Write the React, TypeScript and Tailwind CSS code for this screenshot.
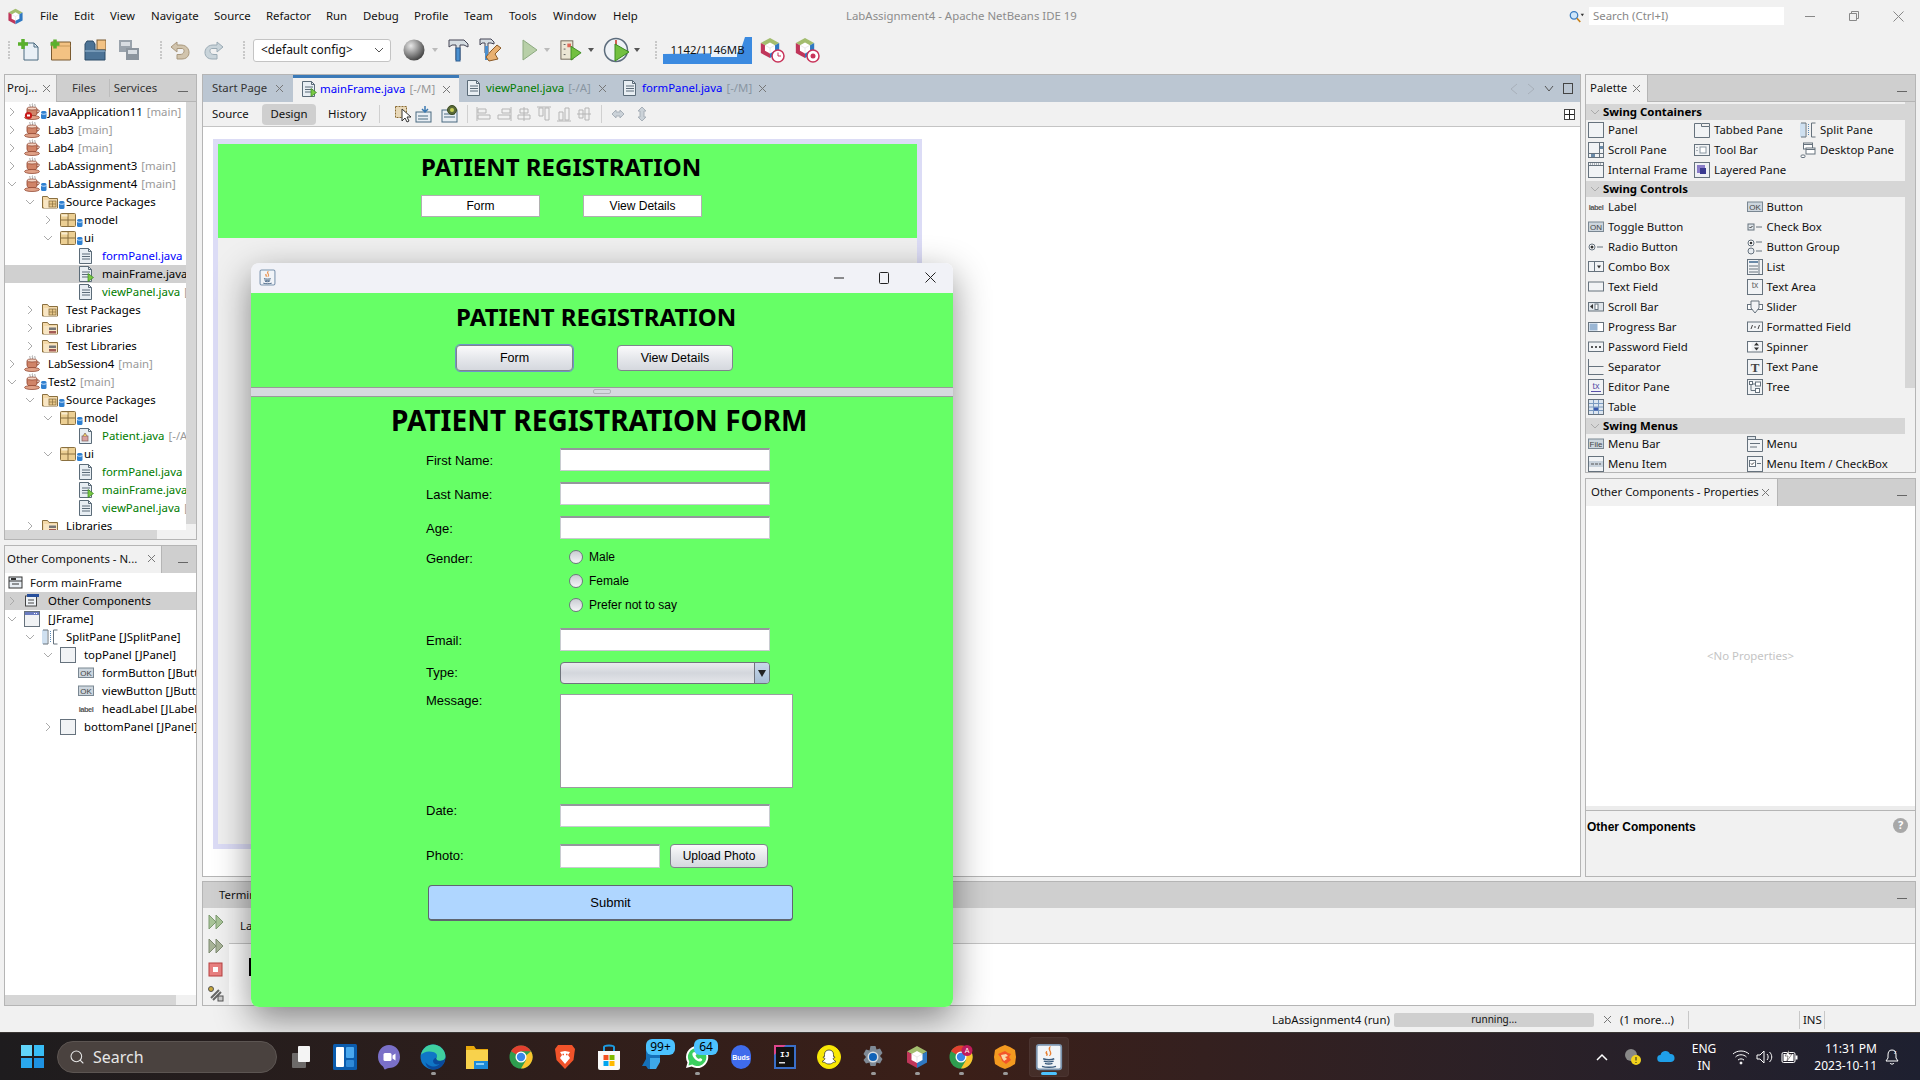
import React from "react";
import { Search } from "lucide-react";

const X = ({ c = "#777" }: { c?: string }) => (
  <svg width="9" height="9" viewBox="0 0 9 9" className="shrink-0"><path d="M1 1l7 7M8 1L1 8" stroke={c} strokeWidth="1" /></svg>
);
const Min = () => <div className="h-[1px] w-[10px] bg-[#666] mt-[6px]" />;
const ChevR = () => (
  <svg width="14" height="14" viewBox="0 0 14 14" className="shrink-0"><path d="M5 3l4 4-4 4" fill="none" stroke="#aaa" strokeWidth="1" /></svg>
);
const ChevD = () => (
  <svg width="14" height="14" viewBox="0 0 14 14" className="shrink-0"><path d="M3 5l4 4 4-4" fill="none" stroke="#aaa" strokeWidth="1" /></svg>
);

const DbBadge = () => (
  <svg width="8" height="18" viewBox="0 0 8 18"><rect x="1" y="8" width="5.5" height="8" rx="1.5" fill="#2f80d0" /><path d="M1 10.5c1.5 1 4 1 5.5 0" stroke="#cfe6ff" strokeWidth="1" fill="none" /></svg>
);
const Cup = ({ err }: { err?: boolean }) => (
  <svg width="16" height="18" viewBox="0 0 16 18">
    <path d="M6 1c-1 1 1 2 0 3M8.5 0.5c-1 1 1 2 0 3.5M11 1c-1 1 1 2 0 3" stroke="#999" fill="none" strokeWidth=".9" />
    <path d="M3 5.500h10v4.500c0 2-2 3.500-5 3.500S3 12 3 10z" fill="#d08468" stroke="#8a3c26" strokeWidth=".8" />
    <ellipse cx="8" cy="5.500" rx="5" ry="1.500" fill="#f4d6c6" stroke="#8a3c26" strokeWidth=".7" />
    <path d="M13 7h1.500c1 0 1 3-1.500 3" fill="none" stroke="#8a3c26" />
    <ellipse cx="8" cy="14.500" rx="7.500" ry="2" fill="#e0a288" stroke="#8a3c26" strokeWidth=".7" />
    {err && <circle cx="4.500" cy="12.500" r="3.600" fill="#c81818" />}
    {err && <rect x="3" y="11.500" width="3" height="2" fill="#fff" />}
  </svg>
);
const Folder = ({ kind }: { kind: "pkg" | "lib" }) => (
  <svg width="16" height="16" viewBox="0 0 16 16">
    <path d="M.5 14V2.500h5l1.500 2h8.500V14z" fill="#f4d9a8" stroke="#8a7040" />
    <rect x="2" y="6" width="13" height="8" fill="#f8e6c4" />
    {kind === "pkg" ? (
      <g><rect x="7" y="7" width="7" height="6" fill="#e8c88a" stroke="#8a7040" strokeWidth=".8" /><path d="M10.500 7v6M7 10h7" stroke="#8a7040" strokeWidth=".7" /></g>
    ) : (
      <g><rect x="7" y="7.500" width="7" height="2.500" fill="#777" /><rect x="7" y="11" width="7" height="2.500" fill="#a35b55" /></g>
    )}
  </svg>
);
const Pkg = () => (
  <svg width="16" height="14" viewBox="0 0 16 14"><rect x=".5" y=".5" width="15" height="13" rx="1" fill="#eccf93" stroke="#8a7040" /><path d="M.5 7h15M8 1v12" stroke="#8a7040" /><rect x="1.500" y="1.500" width="6" height="2" fill="#f8ecd0" /></svg>
);
const JavaFile = ({ run, star }: { run?: boolean; star?: boolean }) => (
  <svg width="16" height="16" viewBox="0 0 16 16" className="shrink-0">
    <path d="M1.500 .5h9l3 3v12h-12z" fill="#e8eef3" stroke="#5b6b78" />
    <path d="M10.500 .5v3h3" fill="none" stroke="#5b6b78" />
    {star ? (
      <g><rect x="4" y="8" width="6" height="5" fill="#d8a0a0" stroke="#80605a" strokeWidth=".7" /><path d="M5 8l2-3 2 3" fill="#f0d060" stroke="#80605a" strokeWidth=".7" /></g>
    ) : (
      <path d="M4 6h8M4 8.500h8M4 11h8" stroke="#5b6b78" />
    )}
    {run && <path d="M10 7.500l5.500 4-5.500 4z" fill="#7ac943" stroke="#3a8a20" strokeWidth=".7" />}
  </svg>
);

type Row = { d: number; ch?: "r" | "d"; icon: React.ReactNode; badge?: boolean; t: string; s?: string; c?: string; sel?: boolean };
const pads = ["pl-0", "pl-[18px]", "pl-[36px]", "pl-[54px]"];
const G = "text-[#007c00]";
const projRows: Row[] = [
  { d: 0, ch: "r", icon: <Cup err />, badge: true, t: "JavaApplication11", s: "[main]" },
  { d: 0, ch: "r", icon: <Cup />, t: "Lab3", s: "[main]" },
  { d: 0, ch: "r", icon: <Cup />, t: "Lab4", s: "[main]" },
  { d: 0, ch: "r", icon: <Cup />, t: "LabAssignment3", s: "[main]" },
  { d: 0, ch: "d", icon: <Cup />, badge: true, t: "LabAssignment4", s: "[main]" },
  { d: 1, ch: "d", icon: <Folder kind="pkg" />, badge: true, t: "Source Packages" },
  { d: 2, ch: "r", icon: <Pkg />, badge: true, t: "model" },
  { d: 2, ch: "d", icon: <Pkg />, badge: true, t: "ui" },
  { d: 3, icon: <JavaFile />, t: "formPanel.java", s: "[-/M]", c: "text-[#0000ff]" },
  { d: 3, icon: <JavaFile run />, t: "mainFrame.java", s: "[-/M]", sel: true },
  { d: 3, icon: <JavaFile />, t: "viewPanel.java", s: "[-/A]", c: G },
  { d: 1, ch: "r", icon: <Folder kind="pkg" />, t: "Test Packages" },
  { d: 1, ch: "r", icon: <Folder kind="lib" />, t: "Libraries" },
  { d: 1, ch: "r", icon: <Folder kind="lib" />, t: "Test Libraries" },
  { d: 0, ch: "r", icon: <Cup />, t: "LabSession4", s: "[main]" },
  { d: 0, ch: "d", icon: <Cup />, badge: true, t: "Test2", s: "[main]" },
  { d: 1, ch: "d", icon: <Folder kind="pkg" />, badge: true, t: "Source Packages" },
  { d: 2, ch: "d", icon: <Pkg />, badge: true, t: "model" },
  { d: 3, icon: <JavaFile star />, t: "Patient.java", s: "[-/A]", c: G },
  { d: 2, ch: "d", icon: <Pkg />, badge: true, t: "ui" },
  { d: 3, icon: <JavaFile />, t: "formPanel.java", s: "[-/A]", c: G },
  { d: 3, icon: <JavaFile run />, t: "mainFrame.java", s: "[-/A]", c: G },
  { d: 3, icon: <JavaFile />, t: "viewPanel.java", s: "[-/A]", c: G },
  { d: 1, ch: "r", icon: <Folder kind="lib" />, t: "Libraries" },
];

const Box = ({ children }: { children?: React.ReactNode }) => (
  <svg width="16" height="16" viewBox="0 0 16 16">{children ?? <rect x=".5" y=".5" width="15" height="15" fill="#f1f3f5" stroke="#66727d" />}</svg>
);
const OkIcon = ({ t = "OK" }: { t?: string }) => (
  <Box>
    <rect x=".5" y="3" width="15" height="9.500" fill="#cdd6de" stroke="#7a8792" />
    <text x="8" y="10.800" textAnchor="middle" fontSize="8" fontFamily="Liberation Sans" fill="#444">{t}</text>
  </Box>
);
const LabelIcon = () => (
  <Box><text x="8" y="10.500" textAnchor="middle" fontSize="7.500" fontWeight="700" fontFamily="Liberation Sans" fill="#555" letterSpacing="-.5">label</text></Box>
);
const L = "#66727d";
const BF = "#f1f3f5";
const pal: Record<string, React.ReactNode> = {
  "Panel": <Box />,
  "Tabbed Pane": <Box><path d="M.5 15.500v-14h7v3h8v11z" fill={BF} stroke={L} /><path d="M8 1.500h7.500v3" fill="none" stroke={L} /></Box>,
  "Split Pane": <Box><rect x="0" y="1" width="5" height="14" fill="#cfe0f0" /><path d="M1 1h5v14H1M15.500 1h-4v14h4" fill="none" stroke={L} /><path d="M8.500 2v12" stroke="#5a8ab8" strokeDasharray="1 1" /></Box>,
  "Scroll Pane": <Box><rect x=".5" y=".5" width="15" height="15" fill={BF} stroke={L} /><path d="M11.500 1v14M1 11.500h14" stroke={L} /><rect x="12" y="4" width="3" height="3" fill="#6a8aa8" /><rect x="3" y="12" width="4" height="3" fill="#6a8aa8" /></Box>,
  "Tool Bar": <Box><rect x=".5" y="2.500" width="15" height="11" fill={BF} stroke={L} /><rect x="6" y="5" width="6" height="6" fill="#fff" stroke="#8a97a2" /><path d="M3 5v1M3 8v1" stroke={L} /></Box>,
  "Desktop Pane": <Box><rect x="3.500" y="1" width="9" height="6" fill="#fff" stroke={L} /><rect x="6" y="6" width="9" height="6" fill="#fff" stroke={L} /><path d="M3.500 2.500h9M6 7.500h9" stroke={L} /><rect x="1" y="13" width="4" height="2.500" rx="1" fill="#fff" stroke={L} /></Box>,
  "Internal Frame": <Box><rect x=".5" y=".5" width="15" height="15" fill={BF} stroke={L} /><path d="M1 3.500h14" stroke={L} /><path d="M2 2h12" stroke={L} strokeDasharray="1 1" /></Box>,
  "Layered Pane": <Box><rect x=".5" y=".5" width="15" height="15" fill="#eef0f4" stroke={L} /><rect x="3" y="3" width="8" height="8" fill="#8a7cc8" /><rect x="6" y="6" width="6" height="6" fill="#3a3a90" /></Box>,
  "Label": <LabelIcon />,
  "Button": <OkIcon />,
  "Toggle Button": <OkIcon t="ON" />,
  "Check Box": <Box><rect x="1" y="5" width="6" height="6" fill="#dfe5ea" stroke={L} /><path d="M2.500 8l1 1 2-2" stroke="#333" fill="none" /><path d="M9 8h6" stroke={L} /></Box>,
  "Radio Button": <Box><circle cx="4" cy="8" r="3" fill="#fff" stroke={L} /><circle cx="4" cy="8" r="1.500" fill="#333" /><path d="M9 8h6" stroke={L} /></Box>,
  "Button Group": <Box><circle cx="4" cy="4" r="3" fill="#fff" stroke={L} /><circle cx="4" cy="4" r="1.300" fill="#333" /><circle cx="4" cy="12" r="3" fill="#e8ecf0" stroke={L} /><path d="M9 3h6M9 12h6" stroke={L} /></Box>,
  "Combo Box": <Box><rect x=".5" y="2.500" width="15" height="10" fill={BF} stroke={L} /><path d="M6.500 3v9" stroke={L} /><path d="M9 6.500h4l-2 3z" fill="#333" /></Box>,
  "List": <Box><rect x=".5" y=".5" width="15" height="15" fill={BF} stroke={L} /><rect x="2" y="2" width="9" height="2" fill="#6a8aa8" /><path d="M2 7h9M2 10h9M2 13h9M12 1v14" stroke={L} /></Box>,
  "Text Field": <Box><rect x=".5" y="3" width="15" height="9" fill={BF} stroke={L} /></Box>,
  "Text Area": <Box><rect x=".5" y=".5" width="15" height="15" fill={BF} stroke={L} /><text x="8" y="9" textAnchor="middle" fontSize="8.500" fontFamily="Liberation Sans" fill="#666">tx</text></Box>,
  "Scroll Bar": <Box><rect x=".5" y="3.500" width="15" height="8.500" fill="#dfe5ea" stroke={L} /><path d="M5 5l-3 2.500 3 2.500z" fill="#333" /><rect x="7" y="5" width="3" height="5.500" fill="#fff" stroke={L} /></Box>,
  "Slider": <Box><rect x=".5" y="5.500" width="15" height="5" fill="#fff" stroke={L} /><path d="M4 2h8v7l-4 5-4-5z" fill="#f1f3f5" stroke={L} /></Box>,
  "Progress Bar": <Box><rect x=".5" y="3.500" width="15" height="9" fill="#fff" stroke={L} /><rect x="1.500" y="4.500" width="8" height="7" fill="#9ab6d4" /></Box>,
  "Formatted Field": <Box><rect x=".5" y="3" width="15" height="9.500" fill={BF} stroke={L} /><path d="M4 10l1.500-4M7 8h2M11 10l1.500-4" stroke="#444" /></Box>,
  "Password Field": <Box><rect x=".5" y="3" width="15" height="9.500" fill={BF} stroke={L} /><path d="M3 8h10" stroke="#222" strokeWidth="1.500" strokeDasharray="2 2" /></Box>,
  "Spinner": <Box><rect x=".5" y="2.500" width="15" height="10.500" fill={BF} stroke={L} /><rect x="1.500" y="3.500" width="3" height="8.500" fill="#fff" /><path d="M7 6.500l2.500-3 2.500 3zM7 8.500l2.500 3 2.500-3z" fill="#333" /></Box>,
  "Separator": <Box><path d="M.5 0v16M.5 7.500h15" stroke={L} /><path d="M.5 15.500h15" stroke={L} /></Box>,
  "Text Pane": <Box><rect x=".5" y=".5" width="15" height="15" fill={BF} stroke={L} /><text x="8" y="12.500" textAnchor="middle" fontSize="13" fontWeight="700" fontFamily="Liberation Serif" fill="#444">T</text></Box>,
  "Editor Pane": <Box><rect x=".5" y=".5" width="15" height="15" fill={BF} stroke={L} /><text x="8" y="9.500" textAnchor="middle" fontSize="9" fontFamily="Liberation Sans" fill="#5a50a8">tx</text><path d="M3 12.500h10" stroke="#5a50a8" /></Box>,
  "Tree": <Box><rect x=".5" y=".5" width="15" height="15" fill={BF} stroke={L} /><rect x="2.500" y="2.500" width="3" height="3" fill="#fff" stroke={L} /><rect x="8.500" y="3" width="5" height="4" fill="#fff" stroke={L} /><rect x="8.500" y="9.500" width="4" height="4" fill="#fff" stroke={L} /><path d="M4 6v5.500h4.500M6 5h2" stroke={L} fill="none" /></Box>,
  "Table": <Box><rect x=".5" y=".5" width="15" height="15" fill="#dde6f0" stroke={L} /><path d="M1 4.500h14M1 8h14M1 11.500h14M5.500 1v14M10.500 1v14" stroke="#7a9ac0" /><rect x="6" y="8.500" width="4" height="3" fill="#3a5ab0" /></Box>,
  "Menu Bar": <OkIcon t="File" />,
  "Menu": <Box><path d="M.5 15.500V3.500h15v12z" fill={BF} stroke={L} /><rect x=".5" y=".5" width="8" height="3" fill="#dfe5ea" stroke={L} /><path d="M3 7.500h10M3 11h7" stroke={L} /></Box>,
  "Menu Item": <Box><rect x=".5" y=".5" width="15" height="15" fill={BF} stroke={L} /><rect x="1" y="5" width="14" height="6" fill="#c8d2dc" /><path d="M3 8h10" stroke="#555" strokeDasharray="3 1" /></Box>,
  "Menu Item / CheckBox": <Box><rect x=".5" y=".5" width="15" height="15" fill={BF} stroke={L} /><rect x="2.500" y="4.500" width="6" height="6" fill="#fff" stroke={L} /><path d="M4 7.500l1 1 2-2" stroke="#333" fill="none" /><path d="M10 7.500h4" stroke={L} /></Box>,
};

const PalItem = ({ n, w }: { n: string; w: string }) => (
  <div className={`flex items-center h-[20px] gap-[4px] ${w}`}>
    <span className="shrink-0 w-[16px] h-[16px] flex">{pal[n]}</span>
    <span className="whitespace-nowrap">{n}</span>
  </div>
);
const PalHead = ({ t }: { t: string }) => (
  <div className="flex items-center h-[16px] bg-[#d6d6d6] font-bold text-black pl-[2px] gap-[1px]"><ChevD /><span>{t}</span></div>
);
const PalTwo = ({ a, b }: { a: string; b?: string }) => (
  <div className="flex pl-[2px]"><PalItem n={a} w="w-[160px]" />{b && <PalItem n={b} w="w-[160px]" />}</div>
);

const PanelTab = ({ t, w, close = true }: { t: string; w: string; close?: boolean }) => (
  <div className={`flex h-[27px] items-center bg-[#f1f1f1] border-r border-[#b5b5b5] pl-[2px] pr-[5px] justify-between ${w}`}>
    <span className="whitespace-nowrap">{t}</span>{close && <X />}
  </div>
);

const TreeRow = ({ r }: { r: Row }) => (
  <div className={`flex items-center h-[18px] whitespace-nowrap overflow-hidden ${pads[r.d]} ${r.sel ? "bg-[#d0d0d0]" : ""}`}>
    <span className="w-[14px] h-[14px] shrink-0 ml-0 flex">{r.ch === "r" ? <ChevR /> : r.ch === "d" ? <ChevD /> : null}</span>
    <span className="w-[16px] h-[18px] ml-[5px] shrink-0 flex items-center">{r.icon}</span>
    <span className="w-[8px] h-[18px] shrink-0 flex">{r.badge && <DbBadge />}</span>
    <span className={r.c ?? "text-black"}>{r.t}</span>
    {r.s && <span className="text-[#9a9a9a] ml-[4px]">{r.s}</span>}
  </div>
);

const Grip = ({ ml }: { ml: string }) => (
  <div className={`w-[2px] h-[18px] shrink-0 ${ml} flex flex-col justify-between`}>
    {[0, 1, 2, 3, 4, 5].map((i) => <div key={i} className="w-[2px] h-[2px] bg-[#c8c8c8]" />)}
  </div>
);
const TB = ({ ml, w, children }: { ml: string; w: string; children: React.ReactNode }) => (
  <div className={`${ml} ${w} h-[26px] shrink-0 flex items-center justify-center`}>{children}</div>
);
const Tri = ({ ml, c = "#bbb" }: { ml: string; c?: string }) => (
  <svg width="6" height="4" viewBox="0 0 6 4" className={`${ml} shrink-0`}><path d="M0 0h6L3 4z" fill={c} /></svg>
);

const NB = ({ size = 24 }: { size?: number }) => (
  <svg width={size} height={size} viewBox="0 0 24 24">
    <path d="M12 1l10 5.500L12 12 2 6.500z" fill="#a3bd6e" />
    <path d="M2 6.500L12 12v11L2 17.500z" fill="#c0365a" />
    <path d="M22 6.500L12 12v11l10-5.500z" fill="#2f78c2" />
    <path d="M12 6l5.500 3v6L12 18l-5.500-3V9z" fill="#fff" />
    <path d="M12 12v6M12 12l5.500-3M12 12L6.500 9" stroke="#d8d8d8" strokeWidth=".6" />
  </svg>
);

const JavaCup = ({ s = 16 }: { s?: number }) => (
  <svg width={s} height={s} viewBox="0 0 24 24">
    <rect x="1.500" y="1.500" width="21" height="21" rx="2" fill="#f1f4f8" stroke="#7b93ad" strokeWidth="1.500" />
    <path d="M13 3c-3 3 2 4-.5 8 3-2.500-1-4 .5-8zM10 7c-2 2 1 2.500 0 4 1.500-1.500-.5-2.500 0-4z" fill="#e8731a" stroke="#e8731a" strokeWidth=".6" />
    <path d="M7 13.500c3 1 7 1 9.500 0M7.500 15.500c2.500.8 6 .8 8.500 0M8.500 17.500c2 .6 4.500.6 6.500 0M6 20c3 1 9 1 12 0" stroke="#3a5a7c" strokeWidth="1.200" fill="none" />
  </svg>
);

const Chrome = ({ badge }: { badge?: boolean }) => (
  <svg width="24" height="24" viewBox="0 0 24 24">
    <circle cx="12" cy="12" r="11.500" fill="#2e9e4f" />
    <path d="M2 6.200A11.500 11.500 0 0 1 22 6.200H12l-5 3z" fill="#e2402f" />
    <path d="M22 6.200A11.500 11.500 0 0 1 12 23.500l4.800-8 .2-5z" fill="#fbc32d" />
    <circle cx="12" cy="12" r="5.500" fill="#fff" />
    <circle cx="12" cy="12" r="4.200" fill="#3b86e8" />
    {badge && <circle cx="18" cy="5.500" r="5.500" fill="#c01c5c" />}
    {badge && <text x="18" y="8" textAnchor="middle" fontSize="7" fill="#fff" fontFamily="Liberation Sans">A</text>}
  </svg>
);

const tbIcons: { key: string; node: React.ReactNode; dot?: boolean; act?: boolean; badge?: string; bw?: string }[] = [
  { key: "task", node: <svg width="24" height="24" viewBox="0 0 24 24"><rect x="3" y="8" width="14" height="15" rx="1" fill="#6d6a69" /><rect x="9" y="1" width="12" height="16" rx="1" fill="#f4f4f4" /></svg> },
  { key: "widg", node: <svg width="24" height="26" viewBox="0 0 24 26"><rect x="0" y="0" width="24" height="26" rx="1.500" fill="#0b5cad" /><rect x="3" y="3" width="8" height="20" rx="1" fill="#fff" /><rect x="13" y="3" width="8" height="11" rx="1" fill="#4aa8ee" /><rect x="13" y="16" width="8" height="7" rx="1" fill="#2f8ad8" /></svg> },
  { key: "teams", node: <svg width="24" height="26" viewBox="0 0 24 26"><path d="M12 1c6.500 0 11 5 11 12 0 6.500-4.500 11-11 11-1.500 0-2.500 1-4 1.500-1 0-1-2-2-3C3 20.500 1 17 1 13 1 6 5.500 1 12 1z" fill="#7a70c8" /><rect x="6.500" y="9" width="8" height="8" rx="1.500" fill="#fff" /><path d="M15.500 11.500l3-2v7l-3-2z" fill="#fff" /></svg> },
  { key: "edge", dot: true, node: <svg width="26" height="26" viewBox="0 0 24 24"><circle cx="12" cy="12" r="11.500" fill="#0f76c6" /><path d="M23.500 12c0 4-2.500 11-10 11.500-5 0-8-3-8.500-7 2 4 10 6 13 2-3 1-6 0-6-3 1-4 7-3.500 11.500-3.500z" fill="#0a4a9c" /><path d="M1 10C2 4 7 .5 12 .5c6 0 11.500 5 11.500 11 0 3-3 4-5.500 4-2 0-3-1-3-2.500 1-1 1.500-4-2-5.500C8 6 3 7 1 10z" fill="#3fd0a0" /></svg> },
  { key: "exp", node: <svg width="24" height="26" viewBox="0 0 24 26"><path d="M1 2h8l2 3h12v19H1z" fill="#e8a80c" /><rect x="1" y="6" width="22" height="19" fill="#f8d24c" /><rect x="9" y="17" width="14" height="8" fill="#1c8ad8" /><rect x="11" y="19" width="8" height="2" fill="#8ad0f8" /></svg> },
  { key: "chrome", node: <Chrome /> },
  { key: "brave", node: <svg width="22" height="26" viewBox="0 0 22 26"><path d="M4 1h14l3 4-1.500 11L11 25 2.500 16 1 5z" fill="#f1532a" /><path d="M6 8l5-1 5 1-2 3 2 3-5 6-5-6 2-3z" fill="#fff" /><path d="M8.500 10.500h1.500M12 10.500h1.500" stroke="#f1532a" strokeWidth="1.500" /></svg> },
  { key: "store", node: <svg width="24" height="26" viewBox="0 0 24 26"><path d="M7 7V3c0-2 10-2 10 0v4" fill="none" stroke="#1d9be0" strokeWidth="2" /><path d="M1 7h22v17a2 2 0 0 1-2 2H3a2 2 0 0 1-2-2z" fill="#fafafa" /><rect x="6.500" y="11" width="5" height="5" fill="#f25022" /><rect x="12.500" y="11" width="5" height="5" fill="#7fba00" /><rect x="6.500" y="17" width="5" height="5" fill="#00a4ef" /><rect x="12.500" y="17" width="5" height="5" fill="#ffb900" /></svg> },
  { key: "mail", badge: "99+", bw: "left-[15px] w-[29px]", node: <svg width="24" height="26" viewBox="0 0 24 26"><path d="M5 1h14v15l-5 9H7l-2-3H1l4-7z" fill="#1570b8" /><path d="M9 14h10v4l-4 7H9z" fill="#3ea8e8" /></svg> },
  { key: "wa", dot: true, badge: "64", bw: "left-[19px] w-[24px]", node: <svg width="24" height="26" viewBox="0 0 24 24"><path d="M12 1a11 11 0 0 0-9.500 16.500L1 23l5.700-1.500A11 11 0 1 0 12 1z" fill="#fff" /><path d="M12 3a9 9 0 0 0-7.700 13.700L3.500 20.500l3.900-1A9 9 0 1 0 12 3z" fill="#3ccf5f" /><path d="M8 7.500c-1 1-1 3 1 5.500s4.500 4 6.500 3.500c1.500-.5 2-2 1.500-2.500l-2-1-1 1c-1.500-.5-3-2-3.500-3.500l1-1-1-2.500c-1 0-2 .2-2.500.5z" fill="#fff" /></svg> },
  { key: "buds", node: <svg width="20" height="26" viewBox="0 0 20 26"><rect x="0" y="1" width="20" height="24" rx="10" fill="#3f6cec" /><text x="10" y="15.500" textAnchor="middle" fontSize="7" fontWeight="700" fontFamily="Liberation Sans" fill="#fff">Buds</text></svg> },
  { key: "ij", node: <svg width="22" height="24" viewBox="0 0 22 24"><rect width="22" height="24" fill="#3a6fc8" /><path d="M0 0h12L0 10z" fill="#e0468c" /><rect x="2" y="2" width="18" height="20" fill="#111" /><text x="6" y="11.500" fontSize="8" fontWeight="700" fontFamily="Liberation Mono" fill="#fff">IJ</text><rect x="5" y="17" width="6" height="1.500" fill="#ddd" /></svg> },
  { key: "snap", node: <svg width="24" height="26" viewBox="0 0 24 24"><circle cx="12" cy="12" r="11.500" fill="#f8e806" stroke="#f8e806" /><path d="M12 5c3 0 4.500 2 4.500 4.500v2l1.500.5c0 1-1.500 1-2 1.500 0 1 2 2.500 3 3-1 1-2 .5-3 1-1 1-2 1.500-4 1.500s-3-.5-4-1.500c-1-.5-2 0-3-1 1-.5 3-2 3-3-.5-.5-2-.5-2-1.500l1.500-.5v-2C7.500 7 9 5 12 5z" fill="#fff" stroke="#222" strokeWidth=".7" /></svg> },
  { key: "set", dot: true, node: <svg width="24" height="26" viewBox="0 0 24 24"><path d="M9.500 1h5l1 3.500 3.500-1 2.500 4.500-2.500 3 2.500 3-2.500 4.500-3.500-1-1 3.500h-5l-1-3.500-3.500 1L2.500 15 5 12 2.500 9 5 4.500l3.500 1z" fill="#7f8a96" /><circle cx="12" cy="12" r="5.500" fill="#d8dde2" /><circle cx="12" cy="12" r="4" fill="#0f62b8" /></svg> },
  { key: "nb", dot: true, node: <NB /> },
  { key: "chrome2", dot: true, node: <Chrome badge /> },
  { key: "fox", dot: true, node: <svg width="24" height="26" viewBox="0 0 24 26"><path d="M12 1l5 2 5 3 1 7-1 7-5 3-5 2-5-2-5-3-1-7 1-7 5-3z" fill="#f49a20" /><path d="M5 10l7-3 3 2 3 1-2 3 2 3-5 4-4-3-1-3z" fill="#f4552a" /><path d="M8 11l5-1 2 2-3 1 2 2-3 2-2-3z" fill="#fbd9a8" /></svg> },
  { key: "java", act: true, node: <JavaCup s={28} /> },
];

const Field = ({ w = "w-[210px]", h = "h-[23px]" }: { w?: string; h?: string }) => (
  <div className={`${w} ${h} bg-white border border-[#c8cbd0] border-t-2 border-t-[#94979c] shrink-0`} />
);
const JBtn = ({ t, cls }: { t: string; cls: string }) => (
  <div className={`flex items-center justify-center rounded-[4px] border border-[#7f838c] bg-gradient-to-b from-[#fbfbfc] via-[#e6e8ec] to-[#d5d8de] text-black shrink-0 ${cls}`}>{t}</div>
);
const FormRow = ({ l, mt, children, lh = "h-[23px] pt-[2px]" }: { l: string; mt: string; children: React.ReactNode; lh?: string }) => (
  <div className={`flex ${mt}`}>
    <div className={`w-[134px] shrink-0 flex items-center ${lh}`}>{l}</div>
    {children}
  </div>
);
const Radio = ({ t }: { t: string }) => (
  <div className="flex items-center h-[14px]">
    <div className="w-[14px] h-[14px] rounded-full border border-[#6f7680] bg-gradient-to-b from-[#c9ccd2] to-[#f4f5f7]" />
    <span className="ml-[6px] text-[12px]">{t}</span>
  </div>
);

const AlignIcon = ({ v }: { v: number }) => (
  <svg width="16" height="16" viewBox="0 0 16 16" fill="none" stroke="#b5b5b5">
    {v === 0 && <path d="M1 1v14M2 3h8v4H2zM2 9h12v4H2z" />}
    {v === 1 && <path d="M15 1v14M6 3h8v4H6zM2 9h12v4H2z" />}
    {v === 2 && <path d="M8 1v14M4 3h8v4H4zM2 9h12v4H2z" />}
    {v === 3 && <path d="M1 1h14M3 2v8h4V2zM9 2v12h4V2z" />}
    {v === 4 && <path d="M1 15h14M3 6v8h4V6zM9 2v12h4V2z" />}
    {v === 5 && <path d="M1 8h14M3 4v8h4V4zM9 2v12h4V2z" />}
  </svg>
);

export default function App() {
  return (
    <div className="relative w-[1920px] h-[1080px] overflow-hidden bg-[#f1f1f1] text-[11.4px] text-[#111] font-['Noto_Sans',sans-serif] flex flex-col">
      {/* Menu bar */}
      <div className="h-[32px] flex items-center shrink-0 relative">
        <div className="ml-[7px] w-[33px] shrink-0"><NB size={17} /></div>
        {[["File", "w-[34px]"], ["Edit", "w-[36px]"], ["View", "w-[41px]"], ["Navigate", "w-[63px]"], ["Source", "w-[52px]"], ["Refactor", "w-[60px]"], ["Run", "w-[37px]"], ["Debug", "w-[51px]"], ["Profile", "w-[50px]"], ["Team", "w-[45px]"], ["Tools", "w-[44px]"], ["Window", "w-[60px]"], ["Help", "w-[40px]"]].map(([t, w]) => (
          <span key={t} className={`${w} shrink-0`}>{t}</span>
        ))}
        <div className="ml-[193px] text-[#8c8c8c] w-[723px] shrink-0">LabAssignment4 - Apache NetBeans IDE 19</div>
        <div className="w-[15px] h-[15px] shrink-0 flex mr-[5px]">
          <svg width="18" height="16" viewBox="0 0 18 16"><circle cx="6" cy="6" r="4.500" fill="#cfe6fa" stroke="#3a7cc0" strokeWidth="1.500" /><path d="M9.500 9.500l4 4.500" stroke="#c8801a" strokeWidth="2" /><path d="M14 4h4l-2 3z" fill="#333" /></svg>
        </div>
        <div className="w-[195px] h-[18px] bg-white flex items-center pl-[4px] text-[#888] shrink-0">Search (Ctrl+I)</div>
        <div className="ml-[21px] w-[10px] h-[1px] bg-[#888]" />
        <svg width="12" height="12" viewBox="0 0 12 12" className="ml-[33px]" fill="none" stroke="#888"><path d="M1.500 3.500h7v7h-7zM3.500 3.500v-2h7v7h-2" /></svg>
        <div className="ml-[33px]"><svg width="11" height="11" viewBox="0 0 11 11"><path d="M.5.500l10 10M10.500.500l-10 10" stroke="#888" /></svg></div>
      </div>

      {/* Toolbar */}
      <div className="h-[42px] flex items-center shrink-0 pl-[8px] pb-[6px]">
        <Grip ml="ml-0" />
        <TB ml="ml-[8px]" w="w-[22px]"><svg width="22" height="24" viewBox="0 0 22 24"><path d="M6 5h10l4 4v13H6z" fill="#e9f0f6" stroke="#4a6a80" /><path d="M16 5v4h4" fill="none" stroke="#4a6a80" /><path d="M5 1v10M0 6h10" stroke="#5ab02c" strokeWidth="3.500" /></svg></TB>
        <TB ml="ml-[10px]" w="w-[22px]"><svg width="22" height="24" viewBox="0 0 22 24"><path d="M1.500 4h19v18h-19z" fill="#f3c283" stroke="#7a5a30" /><path d="M1.500 8h19" stroke="#c89858" /><path d="M5 1.500v9M.5 6h9" stroke="#5ab02c" strokeWidth="3.500" /></svg></TB>
        <TB ml="ml-[12px]" w="w-[22px]"><svg width="22" height="24" viewBox="0 0 22 24"><rect x="13" y="2" width="9" height="10" fill="#f3c283" stroke="#7a5a30" /><path d="M1 22V6l2-3h6l2 3v6h10v10z" fill="#4c7396" stroke="#2c4c68" /><path d="M1 13h20" stroke="#9fc0d8" /></svg></TB>
        <TB ml="ml-[12px]" w="w-[22px]"><svg width="22" height="24" viewBox="0 0 22 24"><rect x="1" y="2" width="13" height="12" fill="#9aa3ac" /><rect x="3" y="4" width="9" height="4" fill="#d8dde2" /><rect x="8" y="10" width="13" height="12" fill="#8c959e" /><rect x="10" y="12" width="9" height="4" fill="#d8dde2" /></svg></TB>
        <Grip ml="ml-[20px]" />
        <TB ml="ml-[8px]" w="w-[21px]"><svg width="21" height="22" viewBox="0 0 21 22"><path d="M7 3L1 8l6 5V9.500h5c3 0 3 6-2 6H7V20h5c10 0 9-14-1-14H7z" fill="#d1c4ad" stroke="#a8977c" /></svg></TB>
        <TB ml="ml-[12px]" w="w-[21px]"><svg width="21" height="22" viewBox="0 0 21 22"><path d="M14 3l6 5-6 5V9.500H9c-3 0-3 6 2 6h3V20H9C-1 20 0 6 10 6h4z" fill="#c9d4da" stroke="#9aaab4" /></svg></TB>
        <Grip ml="ml-[19px]" />
        <div className="ml-[8px] w-[138px] h-[23px] shrink-0 bg-white border border-[#c4c4c4] rounded-[3px] flex items-center pl-[7px] justify-between pr-[6px] text-[12px]">
          <span>&lt;default config&gt;</span>
          <svg width="10" height="6" viewBox="0 0 10 6"><path d="M1 1l4 4 4-4" fill="none" stroke="#555" /></svg>
        </div>
        <TB ml="ml-[12px]" w="w-[22px]"><svg width="22" height="22" viewBox="0 0 22 22"><defs><radialGradient id="gl" cx=".35" cy=".3" r=".8"><stop offset="0" stopColor="#e8e8e8" /><stop offset=".6" stopColor="#7c7c7c" /><stop offset="1" stopColor="#333" /></radialGradient></defs><circle cx="11" cy="11" r="10.500" fill="url(#gl)" /></svg></TB>
        <Tri ml="ml-[7px]" />
        <TB ml="ml-[9px]" w="w-[23px]"><svg width="23" height="24" viewBox="0 0 23 24"><path d="M2 2h15l4 4v3l-4-2h-4v15H9V7H5L2 9z" fill="#d6dde2" stroke="#445" /><rect x="9" y="10" width="4" height="13" fill="#4a90d0" stroke="#2c5c90" /></svg></TB>
        <TB ml="ml-[9px]" w="w-[24px]"><svg width="24" height="24" viewBox="0 0 24 24"><path d="M1 1h11l3 3v2l-3-1H9v10H6V5H3L1 7z" fill="#d6dde2" stroke="#445" /><rect x="6" y="8" width="3" height="14" fill="#4a90d0" /><path d="M18 7l4 3-6 6 3 5-9 2-3-4 5-6z" fill="#e8b070" stroke="#8a5a28" /></svg></TB>
        <TB ml="ml-[19px]" w="w-[16px]"><svg width="16" height="22" viewBox="0 0 16 22"><path d="M1 1l14 10L1 21z" fill="#b8cfa8" stroke="#8daa80" /></svg></TB>
        <Tri ml="ml-[6px]" />
        <TB ml="ml-[10px]" w="w-[22px]"><svg width="24" height="24" viewBox="0 0 24 24"><rect x="1" y="2" width="13" height="20" fill="#ece6d4" stroke="#6b6250" /><path d="M4 6h2M4 11h2M4 17h2" stroke="#555" /><rect x="8" y="5" width="4" height="4" fill="#e06858" /><path d="M12 8l11 7-11 8z" fill="#72c040" stroke="#3a8a20" /></svg></TB>
        <Tri ml="ml-[6px]" c="#555" />
        <TB ml="ml-[9px]" w="w-[27px]"><svg width="27" height="26" viewBox="0 0 27 26"><circle cx="13" cy="13" r="11.500" fill="#eef2f6" stroke="#5c6c7c" strokeWidth="1.500" /><path d="M13 3v10" stroke="#c83020" strokeWidth="1.500" /><path d="M12 7l14 8-14 9z" fill="#72c040" stroke="#3a8a20" /></svg></TB>
        <Tri ml="ml-[4px]" c="#555" />
        <Grip ml="ml-[15px]" />
        <div className="relative ml-[6px] w-[89px] h-[27px] shrink-0 flex items-center justify-center">
          <svg width="89" height="27" viewBox="0 0 89 27" className="absolute inset-0"><path d="M0 27V17l74-1 4-4 4-12h7v27z" fill="#3b8ae0" /><rect x="48" y="8" width="26" height="12" fill="#e9f1fa" /></svg>
          <span className="relative">1142/1146MB</span>
        </div>
        <TB ml="ml-[7px]" w="w-[26px]"><div className="relative w-[26px] h-[26px]"><NB size={22} /><svg width="14" height="14" viewBox="0 0 14 14" className="absolute right-0 bottom-0"><circle cx="7" cy="7" r="6" fill="#fff" stroke="#c8345a" strokeWidth="1.500" /><path d="M7 3.500V7h3" stroke="#c8345a" fill="none" /></svg></div></TB>
        <TB ml="ml-[8px]" w="w-[27px]"><div className="relative w-[26px] h-[26px]"><NB size={22} /><svg width="14" height="14" viewBox="0 0 14 14" className="absolute right-0 bottom-0"><circle cx="7" cy="7" r="6" fill="#fff" stroke="#c8345a" strokeWidth="1.500" /><circle cx="7" cy="7" r="2.500" fill="#c8345a" /></svg></div></TB>
      </div>

      {/* Main */}
      <div className="flex h-[933px] shrink-0 pl-[4px] pr-[4px] gap-[5px]">
        {/* Left */}
        <div className="w-[193px] shrink-0 flex flex-col gap-[5px]">
          <div className="h-[466px] border border-[#b5b5b5] flex flex-col shrink-0 overflow-hidden">
            <div className="h-[27px] bg-[#cfcfcf] flex items-center shrink-0 border-b border-[#b5b5b5]">
              <PanelTab t="Proj..." w="w-[52px]" />
              <span className="ml-[15px] text-[#333]">Files</span>
              <div className="ml-[13px] h-[18px] w-[1px] bg-[#bdbdbd]" />
              <span className="ml-[4px] text-[#333]">Services</span>
              <div className="ml-auto mr-[8px]"><Min /></div>
            </div>
            <div className="flex-1 flex min-h-0">
              <div className="flex-1 bg-white overflow-hidden min-w-0 pt-[1px]">
                {projRows.map((r, i) => <TreeRow key={i} r={r} />)}
              </div>
              <div className="w-[10px] bg-[#f1f1f1] shrink-0"><div className="h-[422px] bg-[#d6d6d6]" /></div>
            </div>
            <div className="h-[9px] bg-[#f1f1f1] shrink-0"><div className="h-full w-[152px] bg-[#d6d6d6]" /></div>
          </div>
          <div className="flex-1 border border-[#b5b5b5] flex flex-col min-h-0 mb-[1px]">
            <div className="h-[27px] bg-[#cfcfcf] flex items-center shrink-0">
              <div className="flex h-[27px] w-[157px] pb-[2px] items-center bg-[#f1f1f1] border-r border-[#b5b5b5] pl-[2px] pr-[5px] justify-between"><span className="whitespace-nowrap">Other Components - N...</span><X /></div>
              <div className="ml-auto mr-[8px]"><Min /></div>
            </div>
            <div className="flex-1 bg-white overflow-hidden pt-[1px]">
              <div className="flex items-center h-[18px] whitespace-nowrap pl-[3px]"><svg width="16" height="14" viewBox="0 0 16 14"><rect x="1" y="1" width="13" height="11" fill="#e8eef4" stroke="#333" /><path d="M1 5h13M4 8h7" stroke="#333" /><rect x="3" y="2" width="5" height="2" fill="#333" /></svg><span className="ml-[6px]">Form mainFrame</span></div>
              <TreeRow r={{ d: 0, ch: "r", icon: <svg width="16" height="16" viewBox="0 0 16 16"><rect x="1.500" y="3" width="11" height="10" fill="#eef2f6" stroke="#444" /><rect x="3" y="1" width="12" height="3" fill="#274f9c" /><path d="M4 7h6M4 10h6" stroke="#444" /></svg>, t: "Other Components", sel: true }} />
              <TreeRow r={{ d: 0, ch: "d", icon: <svg width="16" height="16" viewBox="0 0 16 16"><rect x=".5" y=".5" width="15" height="15" fill="#f1f3f5" stroke={L} /><rect x="1" y="1" width="14" height="3" fill="#6a7cc0" /><path d="M10 2.500h4" stroke="#fff" strokeDasharray="1 1" /></svg>, t: "[JFrame]" }} />
              <TreeRow r={{ d: 1, ch: "d", icon: pal["Split Pane"], t: "SplitPane [JSplitPane]" }} />
              <TreeRow r={{ d: 2, ch: "d", icon: <Box />, t: "topPanel [JPanel]" }} />
              <TreeRow r={{ d: 3, icon: <OkIcon />, t: "formButton [JButton]" }} />
              <TreeRow r={{ d: 3, icon: <OkIcon />, t: "viewButton [JButton]" }} />
              <TreeRow r={{ d: 3, icon: <LabelIcon />, t: "headLabel [JLabel]" }} />
              <TreeRow r={{ d: 2, ch: "r", icon: <Box />, t: "bottomPanel [JPanel]" }} />
            </div>
            <div className="h-[10px] bg-[#f1f1f1] shrink-0"><div className="h-full w-[171px] bg-[#d6d6d6]" /></div>
          </div>
        </div>

        {/* Right of left */}
        <div className="flex-1 min-w-0 flex flex-col gap-[4px] mb-[1px]">
          <div className="h-[803px] shrink-0 flex gap-[4px]">
            {/* Editor */}
            <div className="w-[1379px] shrink-0 border border-[#b5b5b5] flex flex-col bg-white">
              <div className="h-[27px] bg-[#bbc6d2] flex items-stretch shrink-0">
                <div className="w-[90px] flex items-center pl-[9px] pb-[1px] gap-[8px] text-[#333]"><span>Start Page</span><X /></div>
                <div className="w-[166px] bg-[#f1f1f1] border-t-[3px] border-[#3b7ab8] flex items-center pl-[8px] pr-[8px] pb-[2px]">
                  <JavaFile run /><span className="ml-[3px] text-[#0000ff] whitespace-nowrap">mainFrame.java</span><span className="ml-[4px] text-[#999] whitespace-nowrap">[-/M]</span><div className="ml-auto"><X /></div>
                </div>
                <div className="w-[156px] flex items-center pl-[7px] pr-[8px] pb-[1px]">
                  <JavaFile /><span className="ml-[4px] text-[#007c00]">viewPanel.java</span><span className="ml-[4px] text-[#8a96a2]">[-/A]</span><div className="ml-auto"><X /></div>
                </div>
                <div className="w-[158px] flex items-center pl-[7px] pb-[1px]">
                  <JavaFile /><span className="ml-[4px] text-[#0000ff]">formPanel.java</span><span className="ml-[4px] text-[#8a96a2]">[-/M]</span><div className="ml-[6px]"><X /></div>
                </div>
                <div className="ml-auto flex items-center gap-[9px] pr-[7px]">
                  <svg width="8" height="12" viewBox="0 0 8 12"><path d="M7 1L1 6l6 5" fill="none" stroke="#a8b0ba" /></svg>
                  <svg width="8" height="12" viewBox="0 0 8 12"><path d="M1 1l6 5-6 5" fill="none" stroke="#a8b0ba" /></svg>
                  <svg width="10" height="8" viewBox="0 0 10 8"><path d="M1 1l4 5 4-5" fill="none" stroke="#555" /></svg>
                  <div className="w-[10px] h-[11px] border border-[#444]" />
                </div>
              </div>
              <div className="h-[25px] bg-[#f1f1f1] border-b border-[#c4c4c4] flex items-center shrink-0 pl-[9px]">
                <span className="w-[37px] shrink-0">Source</span>
                <div className="ml-[13px] w-[54px] h-[21px] bg-[#cfcfcf] rounded-[4px] flex items-center justify-center">Design</div>
                <span className="ml-[12px] w-[38px] shrink-0">History</span>
                <div className="ml-[13px] w-[1px] h-[18px] bg-[#d0d0d0]" />
                <div className="ml-[15px] w-[17px]"><svg width="17" height="18" viewBox="0 0 17 18"><rect x=".5" y="1.500" width="11" height="11" fill="#e8d8b8" stroke="#8a6a30" strokeDasharray="2 1" /><path d="M7 4v12l3-3 2 4 2-1-2-4h4z" fill="#fff" stroke="#333" /></svg></div>
                <div className="ml-[3px] w-[17px]"><svg width="17" height="18" viewBox="0 0 17 18"><rect x="1" y="7" width="15" height="10" fill="#e8eef4" stroke="#4a6a80" /><path d="M3 11h10M3 14h10" stroke="#4a6a80" /><path d="M10 1v6M7 4l3 3 3-3" stroke="#3a78b0" fill="none" strokeWidth="1.500" /></svg></div>
                <div className="ml-[9px] w-[18px]"><svg width="18" height="18" viewBox="0 0 18 18"><rect x="1" y="5" width="15" height="12" fill="#e8eef4" stroke="#4a6a80" /><path d="M3 9h11M3 12h11" stroke="#4a6a80" /><circle cx="11" cy="5" r="4.500" fill="#5a6a38" stroke="#3a4a20" /><circle cx="11" cy="5" r="2" fill="#c8d058" /></svg></div>
                <div className="ml-[8px] w-[1px] h-[18px] bg-[#d0d0d0]" />
                {[0, 1, 2, 3, 4, 5].map((v) => (
                  <div key={v} className={v === 0 ? "ml-[8px] w-[16px]" : "ml-[4px] w-[16px]"}><AlignIcon v={v} /></div>
                ))}
                <div className="ml-[9px] w-[1px] h-[18px] bg-[#d0d0d0]" />
                <div className="ml-[9px]"><svg width="14" height="12" viewBox="0 0 14 12"><path d="M1 6l4-4v2h4V2l4 4-4 4V8H5v2z" fill="#cbd2d8" stroke="#a8b0b8" /></svg></div>
                <div className="ml-[11px]"><svg width="12" height="16" viewBox="0 0 12 16"><path d="M6 1l4 4H8v6h2l-4 4-4-4h2V5H2z" fill="#cbd2d8" stroke="#a8b0b8" /></svg></div>
                <div className="ml-auto mr-[5px]"><svg width="11" height="11" viewBox="0 0 11 11"><rect x=".5" y=".5" width="10" height="10" fill="#fff" stroke="#444" /><path d="M5.500 1v9M1 5.500h9" stroke="#222" /></svg></div>
              </div>
              <div className="flex-1 bg-white pl-[10px] pt-[12px] min-h-0">
                <div className="w-[709px] h-[710px] border-[5px] border-[#dcdcf6] bg-[#f0f0f0]">
                  <div className="h-[94px] bg-[#66ff66] flex flex-col">
                    <div className="ml-[203px] mt-[9px] text-[24px] leading-[28px] font-bold text-black whitespace-nowrap">PATIENT REGISTRATION</div>
                    <div className="ml-[203px] mt-[14px] flex gap-[43px] text-[12px]">
                      <div className="w-[119px] h-[22px] bg-white border border-[#b0b0b0] flex items-center justify-center text-black font-['Liberation_Sans',sans-serif]">Form</div>
                      <div className="w-[119px] h-[22px] bg-white border border-[#b0b0b0] flex items-center justify-center text-black font-['Liberation_Sans',sans-serif]">View Details</div>
                    </div>
                  </div>
                </div>
              </div>
            </div>
            {/* Right */}
            <div className="flex-1 min-w-0 flex flex-col gap-[5px]">
              <div className="h-[399px] shrink-0 border border-[#b5b5b5] flex flex-col overflow-hidden">
                <div className="h-[27px] bg-[#cfcfcf] flex items-center shrink-0 border-b border-[#b5b5b5]">
                  <div className="h-[27px] w-[62px] bg-[#f1f1f1] flex items-center justify-between pl-[4px] pr-[6px] border-r border-[#b5b5b5]"><span>Palette</span><X /></div>
                  <div className="ml-auto mr-[8px]"><Min /></div>
                </div>
                <div className="flex-1 flex min-h-0">
                  <div className="flex-1 min-w-0">
                    <div className="mt-[2px]"><PalHead t="Swing Containers" /></div>
                    <div className="flex pl-[2px]"><PalItem n="Panel" w="w-[106px]" /><PalItem n="Tabbed Pane" w="w-[106px]" /><PalItem n="Split Pane" w="w-[100px]" /></div>
                    <div className="flex pl-[2px]"><PalItem n="Scroll Pane" w="w-[106px]" /><PalItem n="Tool Bar" w="w-[106px]" /><PalItem n="Desktop Pane" w="w-[100px]" /></div>
                    <div className="flex pl-[2px] mb-[1px]"><PalItem n="Internal Frame" w="w-[106px]" /><PalItem n="Layered Pane" w="w-[106px]" /></div>
                    <PalHead t="Swing Controls" />
                    <div className="mb-[1px]">
                      <PalTwo a="Label" b="Button" />
                      <PalTwo a="Toggle Button" b="Check Box" />
                      <PalTwo a="Radio Button" b="Button Group" />
                      <PalTwo a="Combo Box" b="List" />
                      <PalTwo a="Text Field" b="Text Area" />
                      <PalTwo a="Scroll Bar" b="Slider" />
                      <PalTwo a="Progress Bar" b="Formatted Field" />
                      <PalTwo a="Password Field" b="Spinner" />
                      <PalTwo a="Separator" b="Text Pane" />
                      <PalTwo a="Editor Pane" b="Tree" />
                      <PalTwo a="Table" />
                    </div>
                    <PalHead t="Swing Menus" />
                    <div>
                      <PalTwo a="Menu Bar" b="Menu" />
                      <PalTwo a="Menu Item" b="Menu Item / CheckBox" />
                    </div>
                  </div>
                  <div className="w-[10px] shrink-0"><div className="h-[286px] bg-[#d6d6d6]" /></div>
                </div>
              </div>
              <div className="flex-1 min-h-0 border border-[#b5b5b5] flex flex-col">
                <div className="h-[27px] bg-[#cfcfcf] flex items-center shrink-0">
                  <div className="h-[27px] w-[192px] bg-[#f1f1f1] flex items-center justify-between pl-[5px] pr-[7px] pb-[1px] border-r border-[#b5b5b5]"><span className="whitespace-nowrap">Other Components - Properties</span><X /></div>
                  <div className="ml-auto mr-[8px]"><Min /></div>
                </div>
                <div className="h-[304px] bg-white flex items-center justify-center text-[#c4c4c4] border-b-[4px] border-[#ececec] shrink-0">&lt;No Properties&gt;</div>
                <div className="flex-1 border-t border-[#b5b5b5] bg-[#f1f1f1] flex justify-between pl-[1px] pr-[7px] pt-[7px] text-[12px]">
                  <span className="font-bold text-black font-['Liberation_Sans',sans-serif]">Other Components</span>
                  <div className="w-[15px] h-[15px] rounded-full bg-[#a8a8a8] text-white text-[11px] font-bold flex items-center justify-center">?</div>
                </div>
              </div>
            </div>
          </div>
          {/* Output */}
          <div className="flex-1 min-h-0 border border-[#b5b5b5] flex flex-col bg-white">
            <div className="h-[26px] bg-[#cfcfcf] flex items-center shrink-0 pl-[16px]">
              <span>Terminal</span>
              <div className="ml-auto mr-[8px]"><Min /></div>
            </div>
            <div className="flex-1 flex min-h-0">
              <div className="w-[26px] bg-[#f1f1f1] shrink-0 flex flex-col items-center pt-[6px] gap-[8px]">
                <svg width="16" height="16" viewBox="0 0 16 16"><path d="M1 1l7 7-7 7zM8 1l7 7-7 7z" fill="#a8c498" stroke="#7d9a70" /></svg>
                <svg width="16" height="16" viewBox="0 0 16 16"><path d="M1 1l7 7-7 7zM8 1l7 7-7 7z" fill="#a8b498" stroke="#7d8a70" /></svg>
                <svg width="16" height="16" viewBox="0 0 16 16"><rect x="1" y="1" width="13" height="13" fill="#e88080" stroke="#b84040" /><rect x="5" y="5" width="5" height="5" fill="#fff" /></svg>
                <svg width="16" height="16" viewBox="0 0 16 16"><path d="M3 12l8-8M5 14l8-8" stroke="#666" strokeWidth="2" /><circle cx="3" cy="3" r="2.500" fill="#c8a83a" stroke="#555" /><rect x="10" y="10" width="5" height="5" fill="#ccc" stroke="#555" /></svg>
              </div>
              <div className="flex-1 min-w-0 flex flex-col">
                <div className="h-[36px] bg-[#f1f1f1] border-b border-[#c4c4c4] flex items-center pl-[11px] shrink-0">LabAssignment4 (run)</div>
                <div className="flex-1 pl-[20px] pt-[14px]"><div className="w-[2px] h-[18px] bg-black" /></div>
              </div>
            </div>
          </div>
        </div>
      </div>

      {/* Status */}
      <div className="h-[25px] shrink-0 flex items-center pl-[1272px]">
        <span className="whitespace-nowrap w-[122px] shrink-0">LabAssignment4 (run)</span>
        <div className="w-[200px] h-[14px] bg-[#cfcfcf] rounded-[2px] text-[10px] flex items-center justify-center shrink-0">running...</div>
        <div className="ml-[9px] shrink-0"><X /></div>
        <span className="ml-[8px] whitespace-nowrap w-[56px] shrink-0">(1 more...)</span>
        <div className="ml-[12px] w-[1px] h-[18px] bg-[#c8c8c8] shrink-0" />
        <div className="ml-[110px] w-[1px] h-[18px] bg-[#c8c8c8] shrink-0" />
        <span className="ml-[3px] w-[20px] shrink-0">INS</span>
        <div className="ml-[1px] w-[1px] h-[18px] bg-[#c8c8c8] shrink-0" />
      </div>

      {/* Taskbar */}
      <div className="h-[48px] shrink-0 relative z-20 flex items-center bg-gradient-to-r from-[#1e1c1e] via-[#3b1f18] to-[#1e2030] border-t border-[#3a3634] text-white">
        <div className="ml-[21px] w-[23px] h-[23px] grid grid-cols-2 gap-[2px] shrink-0">
          <div className="bg-[#62d5fa]" /><div className="bg-[#38bdf5]" /><div className="bg-[#2aa8ee]" /><div className="bg-[#1e92e2]" />
        </div>
        <div className="ml-[13px] w-[220px] h-[32px] rounded-full bg-[#4a423f] border border-[#5c5552] flex items-center pl-[11px] shrink-0 text-[16px] text-[#e6e6e6]">
          <Search size={16} strokeWidth={1.6} color="#e6e6e6" />
          <span className="ml-[8px]">Search</span>
        </div>
        <div className="ml-[2px] flex shrink-0">
          {tbIcons.map((ic) => (
            <div key={ic.key} className="relative w-[44px] h-[40px] flex items-center justify-center">
              {ic.act && <div className="absolute left-[2px] top-0 w-[40px] h-[40px] rounded-[4px] bg-[#ffffff10] border border-[#ffffff0a]" />}
              <div className="relative">{ic.node}</div>
              {ic.badge && <div className={`absolute top-[2px] h-[16px] ${ic.bw} bg-[#4cc2ff] rounded-[6px] text-black text-[12px] flex items-center justify-center`}>{ic.badge}</div>}
              {ic.dot && <div className="absolute bottom-[2px] left-[20px] w-[5px] h-[3px] rounded-full bg-[#9a9a9a]" />}
              {ic.act && <div className="absolute bottom-[2px] left-[14px] w-[16px] h-[3px] rounded-full bg-[#4cc2ff]" />}
            </div>
          ))}
        </div>
        <div className="ml-auto w-[330px] flex items-center shrink-0 text-[12px]">
          <div className="w-[24px] flex justify-center"><svg width="12" height="8" viewBox="0 0 12 8"><path d="M1 7l5-5 5 5" fill="none" stroke="#fff" strokeWidth="1.500" /></svg></div>
          <svg width="18" height="18" viewBox="0 0 18 18" className="ml-[10px]"><circle cx="7" cy="7" r="6" fill="#888" /><circle cx="12" cy="12" r="5" fill="#f2d21c" /><path d="M12 9v3.500M12 14v1" stroke="#222" /></svg>
          <svg width="18" height="13" viewBox="0 0 18 13" className="ml-[15px]"><path d="M4 12a3.500 3.500 0 0 1-.5-7A5 5 0 0 1 13 4a4 4 0 0 1 1 8z" fill="#1f9fe8" /></svg>
          <div className="ml-[9px] w-[40px] flex flex-col items-center leading-[17px]"><span>ENG</span><span>IN</span></div>
          <svg width="18" height="16" viewBox="0 0 18 16" className="ml-[8px]" fill="none" stroke="#fff"><path d="M1 5c4-4 12-4 16 0M3.500 8c3-3 8-3 11 0M6 11c2-1.500 4-1.500 6 0" /><circle cx="9" cy="14" r="1" fill="#fff" /></svg>
          <svg width="18" height="16" viewBox="0 0 18 16" className="ml-[6px]" fill="none" stroke="#fff"><path d="M1 6h3l4-4v12l-4-4H1zM11 5c1.500 1.500 1.500 4.500 0 6M13.500 3c3 3 3 7 0 10" /></svg>
          <svg width="18" height="14" viewBox="0 0 18 14" className="ml-[7px]"><rect x="1" y="2.500" width="13" height="10" rx="1.500" fill="none" stroke="#fff" /><rect x="2.500" y="4" width="10" height="7" fill="#fff" /><rect x="14.500" y="5.500" width="2" height="4" fill="#fff" /><path d="M8 0L4 6h3l-1 5 5-7H8z" fill="#fff" stroke="#2a2020" strokeWidth=".5" /></svg>
          <div className="ml-[8px] w-[70px] flex flex-col items-end leading-[17px] whitespace-nowrap"><span>11:31 PM</span><span>2023-10-11</span></div>
          <svg width="16" height="18" viewBox="0 0 16 18" className="ml-[7px]" fill="none" stroke="#fff"><path d="M8 2c-3 0-4 2-4 5v3l-2 3h12l-2-3V7c0-3-1-5-4-5zM6 15c.5 1.500 3.500 1.500 4 0" /><text x="10" y="6" fontSize="5" fill="#fff" stroke="none">z</text></svg>
        </div>
      </div>

      {/* Floating app window */}
      <div className="absolute left-[251px] top-[263px] w-[702px] h-[744px] z-10 rounded-[8px] overflow-hidden flex flex-col">
        <div className="h-[30px] bg-[#f1f2f7] flex items-center pl-[8px] pb-[1px] shrink-0">
          <JavaCup s={17} />
          <svg width="10" height="2" viewBox="0 0 10 2" className="ml-[558px]"><path d="M0 1h10" stroke="#222" /></svg>
          <svg width="11" height="12" viewBox="0 0 11 12" className="ml-[35px]"><rect x=".5" y=".5" width="9" height="11" rx="1" fill="none" stroke="#222" /></svg>
          <svg width="11" height="11" viewBox="0 0 11 11" className="ml-[35px]"><path d="M.5.500l10 10M10.500.500l-10 10" stroke="#222" /></svg>
        </div>
        <div className="h-[95px] bg-[#66ff66] shrink-0 flex flex-col border-b border-[#9a9a9a]">
          <div className="ml-[205px] mt-[9px] text-[24px] leading-[30px] font-bold text-black whitespace-nowrap">PATIENT REGISTRATION</div>
          <div className="ml-[205px] mt-[13px] flex gap-[44px] font-['Liberation_Sans',sans-serif] text-[12.5px]">
            <JBtn t="Form" cls="w-[117px] h-[26px] border-[#6f93c8] outline outline-1 outline-[#6f93c8]" />
            <JBtn t="View Details" cls="w-[116px] h-[26px]" />
          </div>
        </div>
        <div className="h-[9px] bg-[#d6d9df] shrink-0 flex justify-center border-b border-[#9a9a9a]">
          <div className="w-[18px] h-[5px] mt-[1px] rounded-[2px] bg-[#d6d9df] border border-[#b0b3b8]" />
        </div>
        <div className="flex-1 bg-[#66ff66] font-['Liberation_Sans',sans-serif] text-[13px] text-black pl-[175px] min-h-0">
          <div className="-ml-[35px] h-[46px] leading-[46px] mb-[5px] text-[28px] font-bold font-['Noto_Sans',sans-serif] whitespace-nowrap">PATIENT REGISTRATION FORM</div>
          <FormRow l="First Name:" mt="mt-0"><Field /></FormRow>
          <FormRow l="Last Name:" mt="mt-[11px]"><Field /></FormRow>
          <FormRow l="Age:" mt="mt-[11px]"><Field /></FormRow>
          <div className="flex mt-[11px] h-[62px]">
            <div className="w-[134px] shrink-0 leading-[16px] pt-[1px]">Gender:</div>
            <div className="pl-[9px] flex flex-col gap-[10px]"><Radio t="Male" /><Radio t="Female" /><Radio t="Prefer not to say" /></div>
          </div>
          <FormRow l="Email:" mt="mt-[16px]"><Field /></FormRow>
          <FormRow l="Type:" mt="mt-[11px]" lh="h-[22px]">
            <div className="w-[210px] h-[22px] rounded-[4px] border border-[#6f747c] bg-gradient-to-b from-[#e9ebef] via-[#d3d6dc] to-[#e4e6ea] flex justify-end overflow-hidden">
              <div className="w-[15px] bg-gradient-to-b from-[#c8d8ea] to-[#a8bed6] border-l border-[#6f747c] flex items-center justify-center">
                <svg width="8" height="7" viewBox="0 0 8 7"><path d="M0 0h8L4 7z" fill="#222" /></svg>
              </div>
            </div>
          </FormRow>
          <FormRow l="Message:" mt="mt-[10px]" lh="h-[13px]"><div className="w-[233px] h-[94px] bg-white border border-[#9a9ca0] shrink-0" /></FormRow>
          <FormRow l="Date:" mt="mt-[16px]" lh="h-[13px]"><Field /></FormRow>
          <FormRow l="Photo:" mt="mt-[17px]" lh="h-[24px]">
            <Field w="w-[100px]" h="h-[24px]" />
            <JBtn t="Upload Photo" cls="ml-[10px] w-[98px] h-[24px] text-[12px]" />
          </FormRow>
          <div className="mt-[17px] ml-[2px] w-[365px] h-[36px] rounded-[4px] border border-[#5f6670] border-b-2 bg-[#afd6ff] flex items-center justify-center">Submit</div>
        </div>
      </div>
      <div className="absolute left-[251px] top-[263px] w-[702px] h-[744px] z-[5] rounded-[8px] shadow-[0_12px_36px_rgba(0,0,0,0.45)]" />
    </div>
  );
}
